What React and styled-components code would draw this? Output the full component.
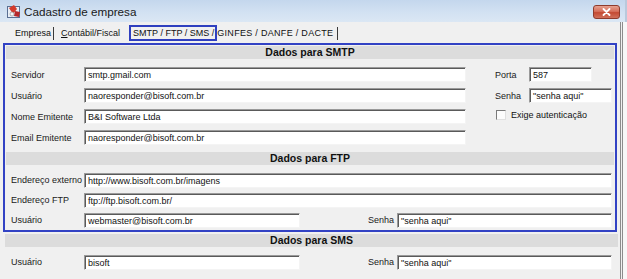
import React from 'react'
import styled, { createGlobalStyle } from 'styled-components';

const GlobalStyle = createGlobalStyle`
  html, body {
    margin: 0;
    padding: 0;
    background: #f7f7f7;
  }
  body {
    font-family: 'Liberation Sans', Arial, sans-serif;
    color: #111;
  }
`;

const Window = styled.div`
  width: 627px;
  height: 279px;
  overflow: hidden;
  display: flex;
  flex-direction: column;
  background: #f7f7f7;
`;

const TitleBar = styled.div`
  height: 22px;
  flex: none;
  display: flex;
  align-items: center;
  padding: 0 6px 0 6px;
  background: linear-gradient(to bottom, #c4d7ed 0%, #d2e1f2 55%, #dbe7f4 100%);
  border-right: 2px solid #b9c9dc;
  box-sizing: border-box;
`;

const Title = styled.span`
  margin-left: 2px;
  font-size: 11.7px;
  color: #1a1a1a;
  flex: 1;
`;

const CloseButton = styled.div`
  width: 27px;
  height: 14px;
  margin-top: 2px;
  margin-right: -1px;
  border: 1px solid #8e3b2d;
  border-radius: 3px;
  background: linear-gradient(to bottom, #e6a190 0%, #d66f5b 45%, #c44a33 55%, #d0705b 100%);
  display: flex;
  align-items: center;
  justify-content: center;
  box-sizing: border-box;
`;

const Frame = styled.div`
  flex: 1;
  width: 623px;
  background: #f0f0f0;
  border-right: 3px double #8c8c8c;
  box-sizing: border-box;
  padding-left: 3px;
  display: flex;
  flex-direction: column;
`;

const TabStrip = styled.div`
  height: 21px;
  flex: none;
  display: flex;
  align-items: center;
  padding: 1px 0 0 12px;
  box-sizing: border-box;
  font-size: 9px;
`;

const Tab = styled.span`
  margin-left: ${p => p.$gap || 0}px;
  letter-spacing: ${p => p.$spread || 0}px;
  white-space: nowrap;
  u { text-decoration: underline; }
`;

const ActiveTab = styled.span`
  margin-left: ${p => p.$gap || 0}px;
  height: 16px;
  display: flex;
  align-items: center;
  padding: 0 1px 0 2px;
  border: 2px solid #2f3fbf;
  box-sizing: border-box;
  white-space: nowrap;
`;

const TabSep = styled.span`
  width: 1px;
  height: 13px;
  margin-left: ${p => p.$gap || 0}px;
  background: #3a3a3a;
`;

const Highlight = styled.div`
  width: 614px;
  border: 2px solid #3242c4;
  box-sizing: border-box;
`;

const SectionHeader = styled.div`
  height: 13px;
  margin: ${p => p.$top ?? 1}px ${p => p.$side ?? 1}px 0;
  background: #dcdcdc;
  font-weight: bold;
  font-size: 10.5px;
  line-height: 13px;
  text-align: center;
  color: #111;
`;

const SmtpArea = styled.div`
  display: flex;
  padding: 5px 0 0 6px;
`;

const Fields = styled.div`
  display: flex;
  flex-direction: column;
  padding: ${p => p.$top ?? 5}px ${p => p.$right ?? 0}px 0 ${p => p.$left ?? 6}px;
`;

const Row = styled.div`
  height: ${p => p.$h || 21}px;
  display: flex;
  align-items: center;
  font-size: 9px;
`;

const Label = styled.span`
  width: ${p => p.$w || 73}px;
  flex: none;
  white-space: nowrap;
  color: #1a1a1a;
`;

const Input = styled.div`
  width: ${p => p.$w}px;
  height: 15px;
  flex: none;
  box-sizing: border-box;
  background: #fff;
  border-top: 1px solid #9a9a9a;
  border-left: 1px solid #9a9a9a;
  border-bottom: 1px solid #f4f4f4;
  border-right: 1px solid #f4f4f4;
  box-shadow: inset 1px 1px 0 #5a5a5a;
  padding: 1px 0 0 3px;
  font-size: 9px;
  line-height: 12px;
  white-space: nowrap;
  overflow: hidden;
  color: #111;
`;

const SideFields = styled.div`
  display: flex;
  flex-direction: column;
  margin-left: 29px;
`;

const Check = styled.span`
  width: 10px;
  height: 10px;
  box-sizing: border-box;
  background: #fcfcfc;
  border-top: 1px solid #7a7a7a;
  border-left: 1px solid #7a7a7a;
  border-bottom: 1px solid #e0e0e0;
  border-right: 1px solid #e0e0e0;
  margin: -3px 5px 0 1px;
`;

const CheckText = styled.span`
  margin-top: -3px;
`;

const PairRight = styled.div`
  margin-left: auto;
  display: flex;
  align-items: center;
`;

const AppIcon = () => (
  <svg width="16" height="16" viewBox="0 0 16 16">
    <rect x="1" y="3" width="13" height="12" fill="#5a6f93" />
    <rect x="2" y="4" width="11" height="10" fill="#e8eef6" />
    <path d="M3 5 L8 2 L11 6 L7 11 Z" fill="#d33a2c" />
    <path d="M9 8 L14 9 L13 14 L8 13 Z" fill="#b5282b" />
    <circle cx="6" cy="11" r="2" fill="#f4f4f4" stroke="#8a8a8a" strokeWidth="0.6" />
  </svg>
);

const CloseIcon = () => (
  <svg width="9" height="8" viewBox="0 0 9 8">
    <path d="M1.5 1 L7.5 7 M7.5 1 L1.5 7" stroke="#fff" strokeWidth="1.8" strokeLinecap="round" />
  </svg>
);

const Field = ({ label, value, w, lw, h }) => (
  <Row $h={h}>
    <Label $w={lw}>{label}</Label>
    <Input $w={w}>{value}</Input>
  </Row>
);

const SplitRow = ({ user }) => (
  <Row $h={20}>
    <Label>Usuário</Label>
    <Input $w={216}>{user}</Input>
    <PairRight>
      <Label $w={29}>Senha</Label>
      <Input $w={215}>"senha aqui"</Input>
    </PairRight>
  </Row>
);

const App = () => (
  <>
    <GlobalStyle />
    <Window>
      <TitleBar>
        <AppIcon />
        <Title>Cadastro de empresa</Title>
        <CloseButton><CloseIcon /></CloseButton>
      </TitleBar>
      <Frame>
        <TabStrip>
          <Tab>Empresa</Tab>
          <TabSep $gap={2} />
          <Tab $gap={7}><u>C</u>ontábil/Fiscal</Tab>
          <ActiveTab $gap={9}>SMTP / FTP / SMS /</ActiveTab>
          <Tab $spread={0.3}>GINFES / DANFE / DACTE</Tab>
          <TabSep $gap={4} />
        </TabStrip>

        <Highlight>
          <SectionHeader>Dados para SMTP</SectionHeader>
          <SmtpArea>
            <Fields $top={0} $left={0}>
              <Field label="Servidor" value="smtp.gmail.com" w={382} />
              <Field label="Usuário" value="naoresponder@bisoft.com.br" w={382} />
              <Field label="Nome Emitente" value="B&I Software Ltda" w={382} />
              <Field label="Email Emitente" value="naoresponder@bisoft.com.br" w={382} />
            </Fields>
            <SideFields>
              <Field label="Porta" value="587" w={63} lw={34} />
              <Field label="Senha" value={'"senha aqui"'} w={83} lw={34} />
              <Row>
                <Check />
                <CheckText>Exige autenticação</CheckText>
              </Row>
            </SideFields>
          </SmtpArea>
          <SectionHeader $top={4}>Dados para FTP</SectionHeader>
          <Fields $right={3}>
            <Field label="Endereço externo" value="http://www.bisoft.com.br/imagens" w={528} h={20} />
            <Field label="Endereço FTP" value="ftp://ftp.bisoft.com.br/" w={528} h={20} />
            <SplitRow user="webmaster@bisoft.com.br" />
          </Fields>
        </Highlight>

        <SectionHeader $top={2} $side={2}>Dados para SMS</SectionHeader>
        <Fields $left={8} $right={8}>
          <SplitRow user="bisoft" />
        </Fields>
      </Frame>
    </Window>
  </>
)

export default App
